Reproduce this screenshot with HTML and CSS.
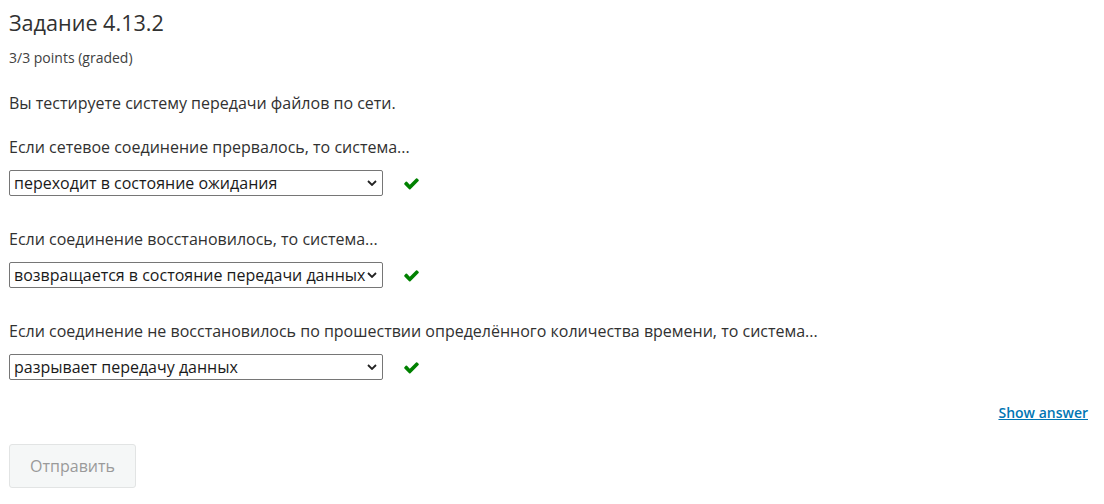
FILE: index.html
```html
<!DOCTYPE html>
<html lang="ru">
<head>
<meta charset="utf-8">
<link rel="stylesheet" href="styles.css">
</head>
<body>
<div class="problem">
  <h3 class="title">Задание 4.13.2</h3>
  <div class="points">3/3 points (graded)</div>
  <p class="intro">Вы тестируете систему передачи файлов по сети.</p>

  <div class="question">
    <p class="label">Если сетевое соединение прервалось, то система...</p>
    <div class="answer-row">
      <div class="select-wrap">
        <select class="select"><option>переходит в состояние ожидания</option></select>
        <svg class="chevron" viewBox="0 0 10 6" width="10" height="6"><path d="M1 1l4 4 4-4" fill="none" stroke="#222" stroke-width="1.8"/></svg>
      </div>
      <svg class="check" viewBox="0 0 1792 1792" width="17" height="17"><path d="M1671 566q0 40-28 68l-724 724-136 136q-28 28-68 28t-68-28l-136-136-362-362q-28-28-28-68t28-68l136-136q28-28 68-28t68 28l294 295 656-657q28-28 68-28t68 28l136 136q28 28 28 68z" fill="#008100"/></svg>
    </div>
  </div>

  <div class="question">
    <p class="label">Если соединение восстановилось, то система...</p>
    <div class="answer-row">
      <div class="select-wrap">
        <select class="select"><option>возвращается в состояние передачи данных</option></select>
        <svg class="chevron" viewBox="0 0 10 6" width="10" height="6"><path d="M1 1l4 4 4-4" fill="none" stroke="#222" stroke-width="1.8"/></svg>
      </div>
      <svg class="check" viewBox="0 0 1792 1792" width="17" height="17"><path d="M1671 566q0 40-28 68l-724 724-136 136q-28 28-68 28t-68-28l-136-136-362-362q-28-28-28-68t28-68l136-136q28-28 68-28t68 28l294 295 656-657q28-28 68-28t68 28l136 136q28 28 28 68z" fill="#008100"/></svg>
    </div>
  </div>

  <div class="question">
    <p class="label">Если соединение не восстановилось по прошествии определённого количества времени, то система...</p>
    <div class="answer-row">
      <div class="select-wrap">
        <select class="select"><option>разрывает передачу данных</option></select>
        <svg class="chevron" viewBox="0 0 10 6" width="10" height="6"><path d="M1 1l4 4 4-4" fill="none" stroke="#222" stroke-width="1.8"/></svg>
      </div>
      <svg class="check" viewBox="0 0 1792 1792" width="17" height="17"><path d="M1671 566q0 40-28 68l-724 724-136 136q-28 28-68 28t-68-28l-136-136-362-362q-28-28-28-68t28-68l136-136q28-28 68-28t68 28l294 295 656-657q28-28 68-28t68 28l136 136q28 28 28 68z" fill="#008100"/></svg>
    </div>
  </div>

  <div class="actions-top">
    <a class="show-answer" href="#">Show answer</a>
  </div>
  <div class="actions">
    <button class="submit" disabled>Отправить</button>
  </div>
</div>
</body>
</html>
```

FILE: styles.css
```css
* { box-sizing: border-box; }
html, body { margin: 0; padding: 0; background: #fff; }
body {
  font-family: "Open Sans", "Noto Sans", sans-serif;
  color: #313131;
}
.problem {
  padding: 7px 16px 0 9px;
}
.title {
  margin: 0;
  font-size: 21.6px;
  font-weight: 400;
  line-height: 32px;
  color: #313131;
}
.points {
  margin-top: 9px;
  font-size: 14px;
  line-height: 20px;
  color: #414141;
}
.intro {
  margin: 23px 0 0;
  font-size: 16px;
  line-height: 24px;
}
.question { margin-top: 20px; }
.question + .question { margin-top: 31px; }
.label {
  margin: 0;
  font-size: 16px;
  line-height: 24px;
}
.answer-row {
  display: flex;
  align-items: center;
  margin-top: 11px;
  gap: 20px;
}
.select-wrap {
  position: relative;
  width: 374px;
  height: 26px;
}
.select {
  appearance: none;
  -webkit-appearance: none;
  width: 100%;
  height: 100%;
  margin: 0;
  padding: 0 16px 0 4px;
  border: 1px solid #767676;
  border-radius: 2px;
  background: #fff;
  font-family: "Open Sans", "Noto Sans", sans-serif;
  font-size: 16px;
  color: #1a1a1a;
}
.chevron {
  position: absolute;
  right: 6px;
  top: 10px;
  pointer-events: none;
}
.check { display: block; }
.actions-top {
  display: flex;
  justify-content: flex-end;
  margin-top: 23px;
}
.show-answer {
  font-size: 14px;
  font-weight: 600;
  color: #0075b4;
  text-decoration: underline;
  line-height: 20px;
}
.actions {
  margin-top: 21px;
}
.submit {
  font-family: "Open Sans", "Noto Sans", sans-serif;
  font-size: 16px;
  color: #9a9a9a;
  background: #f5f7f7;
  border: 1px solid #e2e4e4;
  border-radius: 3px;
  width: 127px;
  height: 44px;
  padding: 0;
}
```
